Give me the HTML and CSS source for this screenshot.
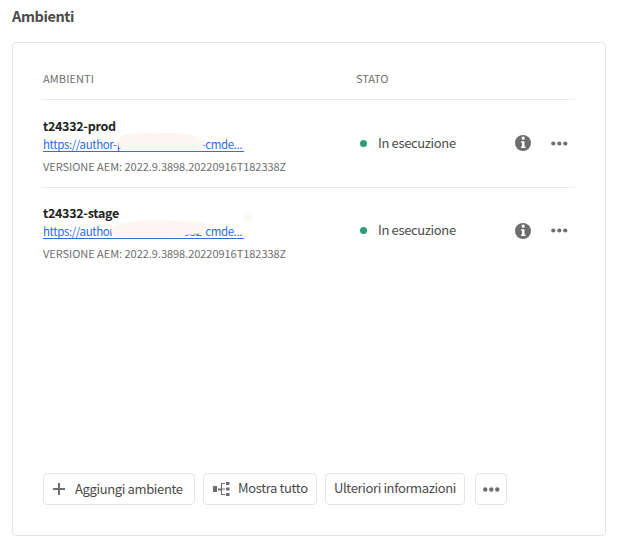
FILE: index.html
```html
<!DOCTYPE html>
<html lang="it">
<head>
<meta charset="utf-8">
<title>Ambienti</title>
<link rel="stylesheet" href="styles.css">
</head>
<body>
<h1 class="title">Ambienti</h1>
<section class="card">
  <div class="row head"><span>AMBIENTI</span><span class="head-state">STATO</span></div>
  <div class="row env">
    <div class="info">
      <div class="name">t24332-prod</div>
      <div class="link-line"><a class="link"><span class="host-prod">https://author-p</span><span class="tail">2-cmde...</span></a>
        <svg class="smudge" width="220" height="30" viewBox="0 0 220 30"><path d="M75 13Q74 7 84 5L104 4Q128 3 150 6Q160 9 162 14Q160 15 160 19Q159 21 152 21L82 21Q75 21 75 13Z"/></svg>
      </div>
      <div class="version">VERSIONE AEM: 2022.9.3898.20220916T182338Z</div>
    </div>
    <div class="state"><i class="dot"></i><span class="state-text">In esecuzione</span></div>
    <svg class="icon-info" width="16" height="16" viewBox="0 0 16 16"><circle cx="8" cy="8" r="8"/><path class="cut" d="M6.6 3.2a1.6 1.6 0 1 1 3.2 0 1.6 1.6 0 0 1-3.2 0ZM6 6.3h3.500v5.200h1V13H6v-1.500h1V7.800H6Z"/></svg>
    <svg class="icon-more" width="17" height="5" viewBox="0 0 17 5"><circle cx="2.300" cy="2.500" r="2.100"/><circle cx="8.300" cy="2.500" r="2.100"/><circle cx="14.300" cy="2.500" r="2.100"/></svg>
  </div>
  <div class="row env last">
    <div class="info">
      <div class="name name-stage">t24332-stage</div>
      <div class="link-line"><a class="link"><span class="host-stage">https://author</span><span class="tail">332-cmde...</span></a>
        <svg class="smudge" width="220" height="30" viewBox="0 0 220 30"><path d="M68 14Q70 8 84 7Q108 2 132 5L158 6Q166 9 162 17Q144 18 135 20.500Q106 22 78 21Q68 20 68 14Z"/><circle class="spot" cx="205" cy="2" r="4"/></svg>
      </div>
      <div class="version">VERSIONE AEM: 2022.9.3898.20220916T182338Z</div>
    </div>
    <div class="state"><i class="dot"></i><span class="state-text">In esecuzione</span></div>
    <svg class="icon-info" width="16" height="16" viewBox="0 0 16 16"><circle cx="8" cy="8" r="8"/><path class="cut" d="M6.6 3.2a1.6 1.6 0 1 1 3.2 0 1.6 1.6 0 0 1-3.2 0ZM6 6.3h3.500v5.200h1V13H6v-1.500h1V7.800H6Z"/></svg>
    <svg class="icon-more" width="17" height="5" viewBox="0 0 17 5"><circle cx="2.300" cy="2.500" r="2.100"/><circle cx="8.300" cy="2.500" r="2.100"/><circle cx="14.300" cy="2.500" r="2.100"/></svg>
  </div>
  <div class="actions">
    <button class="btn add"><svg width="12" height="12" viewBox="0 0 12 12"><path d="M5 0h2v5H12v2H7V12H5V7H0V5h5Z"/></svg><span>Aggiungi ambiente</span></button>
    <button class="btn all"><svg width="17" height="14" viewBox="0 0 17 14"><path d="M0 4h4v6H0ZM13 0h3.500v3H13ZM13 5.500h3.500v3H13ZM13 11h3.500v3H13ZM5 6.500h3v-5.500h4v1H9v4.500h3v1H9v4.500h3v1H8v-4.500H5Z"/></svg><span>Mostra tutto</span></button>
    <button class="btn more-info"><span>Ulteriori informazioni</span></button>
    <button class="btn more" aria-label="Altro"><svg width="17" height="5" viewBox="0 0 17 5"><circle cx="2.300" cy="2.500" r="2.200"/><circle cx="8.300" cy="2.500" r="2.200"/><circle cx="14.300" cy="2.500" r="2.200"/></svg></button>
  </div>
</section>
</body>
</html>
```
FILE: styles.css
```css
* { box-sizing: border-box; }
body {
  margin: 0;
  padding: 6px 12px 0;
  background: #fff;
  color: #4b4b4b;
  font: 13px/20px "Noto Sans CJK SC", "Open Sans", sans-serif;
  letter-spacing: -.36px;
  white-space: nowrap;
}
svg { fill: #6e6e6e; flex: none; display: block; }
.title { margin: 0 0 16px; font-size: 14.5px; line-height: 20px; font-weight: 700; letter-spacing: -.4px; }
.card {
  display: flex;
  flex-direction: column;
  width: 594px;
  height: 494px;
  padding: 16px 30px 30px;
  border: 1px solid #e4e4e4;
  border-radius: 4px;
}
.row { display: grid; grid-template-columns: 313px 154px 36px 1fr; border-bottom: 1px solid #eaeaea; }
.head { height: 41px; padding-top: 9px; font-size: 11px; line-height: 20px; color: #6e6e6e; letter-spacing: .1px; }
.head-state { letter-spacing: -.1px; }
.env { height: 88px; padding-top: 17px; }
.last { border-bottom: 0; padding-top: 16px; }
.name { height: 20px; font-weight: 700; line-height: 18px; font-size: 12.5px; color: #222; letter-spacing: -.3px; }
.link-line { position: relative; height: 16px; }
.link {
  display: flex;
  justify-content: space-between;
  width: 201px;
  height: 15px;
  padding-right: 2px;
  font-size: 11.5px;
  line-height: 15px;
  letter-spacing: -.4px;
  color: #1f6be8;
  border-bottom: 1px solid #2d71dc;
}
.smudge { position: absolute; left: 0; top: -8px; fill: #fbf6ef; filter: blur(.7px); overflow: visible; }
.spot { opacity: .7; }
.version { margin-top: 4px; font-size: 11px; line-height: 18px; color: #6e6e6e; letter-spacing: -.04px; }
.state { display: flex; align-items: center; height: 20px; margin-top: 16px; padding-left: 4px; }
.dot { width: 7px; height: 7px; border-radius: 50%; background: #2d9d78; margin-right: 11px; }
.icon-info { margin: 18px 0 0 5px; }
.last .icon-info { margin-top: 19px; }
.cut { fill: #fff; }
.icon-more { margin: 24px 0 0 5px; }
.actions { display: flex; margin-top: auto; }
.btn {
  display: flex;
  align-items: center;
  height: 32px;
  padding: 0;
  border: 1px solid #e4e4e4;
  border-radius: 4px;
  background: #fff;
  color: #4b4b4b;
  font: inherit;
  letter-spacing: -.36px;
}
.btn span { margin-top: -2px; }
.btn.add span { margin-top: 0; }
.add { width: 152px; padding-left: 9px; gap: 10px; margin-right: 8px; }
.all { width: 114px; padding-left: 9px; gap: 8px; margin-right: 8px; }
.more-info { width: 140px; padding-left: 8px; margin-right: 10px; }
.more { width: 32px; justify-content: center; }
```
